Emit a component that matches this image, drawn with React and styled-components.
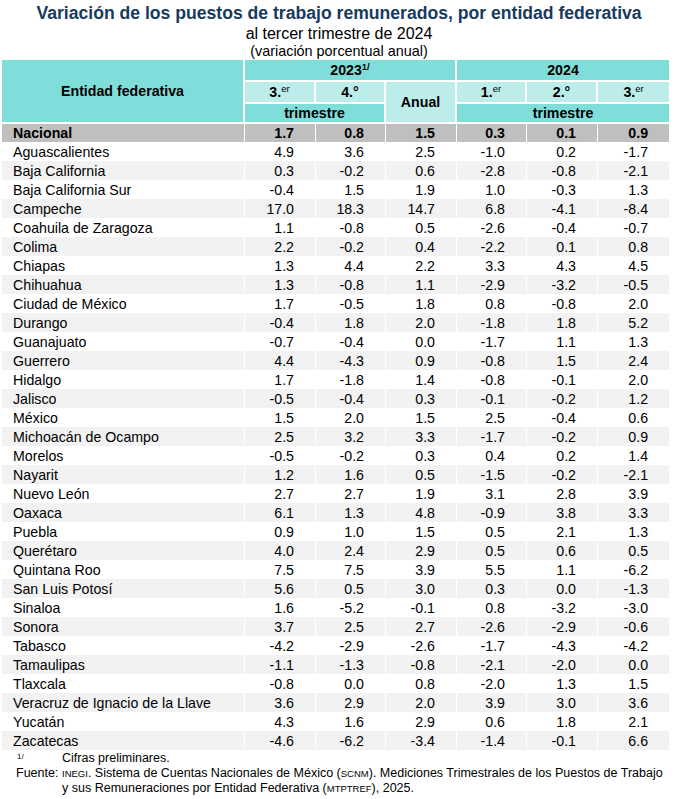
import styled, { createGlobalStyle } from "styled-components";

const GlobalStyle = createGlobalStyle`
  body {
    margin: 0;
    background: #fff;
    font-family: "Liberation Sans", Arial, sans-serif;
    color: #000;
  }
`

const rows = [
  ["Aguascalientes", "4.9", "3.6", "2.5", "-1.0", "0.2", "-1.7"],
  ["Baja California", "0.3", "-0.2", "0.6", "-2.8", "-0.8", "-2.1"],
  ["Baja California Sur", "-0.4", "1.5", "1.9", "1.0", "-0.3", "1.3"],
  ["Campeche", "17.0", "18.3", "14.7", "6.8", "-4.1", "-8.4"],
  ["Coahuila de Zaragoza", "1.1", "-0.8", "0.5", "-2.6", "-0.4", "-0.7"],
  ["Colima", "2.2", "-0.2", "0.4", "-2.2", "0.1", "0.8"],
  ["Chiapas", "1.3", "4.4", "2.2", "3.3", "4.3", "4.5"],
  ["Chihuahua", "1.3", "-0.8", "1.1", "-2.9", "-3.2", "-0.5"],
  ["Ciudad de México", "1.7", "-0.5", "1.8", "0.8", "-0.8", "2.0"],
  ["Durango", "-0.4", "1.8", "2.0", "-1.8", "1.8", "5.2"],
  ["Guanajuato", "-0.7", "-0.4", "0.0", "-1.7", "1.1", "1.3"],
  ["Guerrero", "4.4", "-4.3", "0.9", "-0.8", "1.5", "2.4"],
  ["Hidalgo", "1.7", "-1.8", "1.4", "-0.8", "-0.1", "2.0"],
  ["Jalisco", "-0.5", "-0.4", "0.3", "-0.1", "-0.2", "1.2"],
  ["México", "1.5", "2.0", "1.5", "2.5", "-0.4", "0.6"],
  ["Michoacán de Ocampo", "2.5", "3.2", "3.3", "-1.7", "-0.2", "0.9"],
  ["Morelos", "-0.5", "-0.2", "0.3", "0.4", "0.2", "1.4"],
  ["Nayarit", "1.2", "1.6", "0.5", "-1.5", "-0.2", "-2.1"],
  ["Nuevo León", "2.7", "2.7", "1.9", "3.1", "2.8", "3.9"],
  ["Oaxaca", "6.1", "1.3", "4.8", "-0.9", "3.8", "3.3"],
  ["Puebla", "0.9", "1.0", "1.5", "0.5", "2.1", "1.3"],
  ["Querétaro", "4.0", "2.4", "2.9", "0.5", "0.6", "0.5"],
  ["Quintana Roo", "7.5", "7.5", "3.9", "5.5", "1.1", "-6.2"],
  ["San Luis Potosí", "5.6", "0.5", "3.0", "0.3", "0.0", "-1.3"],
  ["Sinaloa", "1.6", "-5.2", "-0.1", "0.8", "-3.2", "-3.0"],
  ["Sonora", "3.7", "2.5", "2.7", "-2.6", "-2.9", "-0.6"],
  ["Tabasco", "-4.2", "-2.9", "-2.6", "-1.7", "-4.3", "-4.2"],
  ["Tamaulipas", "-1.1", "-1.3", "-0.8", "-2.1", "-2.0", "0.0"],
  ["Tlaxcala", "-0.8", "0.0", "0.8", "-2.0", "1.3", "1.5"],
  ["Veracruz de Ignacio de la Llave", "3.6", "2.9", "2.0", "3.9", "3.0", "3.6"],
  ["Yucatán", "4.3", "1.6", "2.9", "0.6", "1.8", "2.1"],
  ["Zacatecas", "-4.6", "-6.2", "-3.4", "-1.4", "-0.1", "6.6"],
]

const nacional = ["1.7", "0.8", "1.5", "0.3", "0.1", "0.9"]

const Page = styled.div`
    width: 678px;
    padding-top: 3px;
`

const Title = styled.h1`
    margin: 0;
    text-align: center;
    font-size: 17.6px;
    line-height: 21px;
    font-weight: bold;
    color: #173a5e;
`

const Subtitle = styled.div`
    text-align: center;
    font-size: 16px;
    line-height: 20px;
`

const Unit = styled.div`
    text-align: center;
    font-size: 14.4px;
    line-height: 15px;
    margin-bottom: 1px;
`

const Table = styled.table`
    margin-left: 2px;
    width: 667px;
    table-layout: fixed;
    border-collapse: separate;
    border-spacing: 0;
    font-size: 14.2px;
`

const Th = styled.th`
    background-color: ${p => p.$light ? "#bdedea" : "#80deda"};
    font-weight: bold;
    text-align: center;
    padding: 0;
    height: ${p => p.$h || 20}px;
    line-height: 16px;
    border-bottom: 2px solid #fff;
    border-right: ${p => p.$last ? "none" : "2px solid #fff"};
`

const Sup = styled.sup`
    font-size: 9.5px;
    font-weight: normal;
    vertical-align: 5px;
    line-height: 0;
`

const HeadSup = styled(Sup)`
    font-weight: bold;
`

const Row = styled.tr`
    background-color: ${p => p.$total ? "#bfbfbf" : p.$alt ? "#f2f2f2" : "#fff"};
    font-weight: ${p => p.$total ? "bold" : "normal"};
`

const Name = styled.td`
    padding: 0 0 0 11px;
    height: ${p => p.$total ? 18 : 19}px;
    line-height: 16px;
    white-space: nowrap;
    border-right: 1px solid #fff;
`

const Num = styled.td`
    padding: 0 21px 0 0;
    text-align: right;
    line-height: 16px;
    border-right: ${p => p.$last ? "none" : "1px solid #fff"};
`

const Footer = styled.div`
    display: grid;
    grid-template-columns: 46px 1fr;
    margin: 0 8px 0 16px;
    font-size: 12.5px;
    line-height: 15px;
    padding-top: 1px;
`

const Mark = styled.div`
    font-size: 8px;
    line-height: 12px;
    padding-left: 1px;
`

const Caps = styled.span`
    font-size: 9.5px;
    line-height: 1;
    text-transform: uppercase;
`

export default function App() {
    return (
        <Page>
            <GlobalStyle />
            <Title>Variación de los puestos de trabajo remunerados, por entidad federativa</Title>
            <Subtitle>al tercer trimestre de 2024</Subtitle>
            <Unit>(variación porcentual anual)</Unit>
            <Table>
                <colgroup>
                    <col style={{width: 243}} />
                    <col style={{width: 71}} />
                    <col style={{width: 70}} />
                    <col style={{width: 71}} />
                    <col style={{width: 70}} />
                    <col style={{width: 71}} />
                    <col style={{width: 71}} />
                </colgroup>
                <thead>
                    <tr>
                        <Th rowSpan={3}>Entidad federativa</Th>
                        <Th colSpan={3}>2023<HeadSup>1/</HeadSup></Th>
                        <Th colSpan={3} $last>2024</Th>
                    </tr>
                    <tr>
                        <Th $light>3.<Sup>er</Sup></Th>
                        <Th $light>4.°</Th>
                        <Th $light rowSpan={2}>Anual</Th>
                        <Th $light>1.<Sup>er</Sup></Th>
                        <Th $light>2.°</Th>
                        <Th $light $last>3.<Sup>er</Sup></Th>
                    </tr>
                    <tr>
                        <Th colSpan={2} $h={18}>trimestre</Th>
                        <Th colSpan={3} $h={18} $last>trimestre</Th>
                    </tr>
                </thead>
                <tbody>
                    <Row $total>
                        <Name $total>Nacional</Name>
                        {nacional.map((v, i) => <Num key={i} $last={i === 5}>{v}</Num>)}
                    </Row>
                    {rows.map((r, idx) => (
                        <Row key={r[0]} $alt={idx % 2 === 1}>
                            <Name>{r[0]}</Name>
                            {r.slice(1).map((v, i) => <Num key={i} $last={i === 5}>{v}</Num>)}
                        </Row>
                    ))}
                </tbody>
            </Table>
            <Footer>
                <Mark>1/</Mark>
                <div>Cifras preliminares.</div>
                <div>Fuente:</div>
                <div>
                    <Caps>Inegi</Caps>. Sistema de Cuentas Nacionales de México (<Caps>scnm</Caps>). Mediciones Trimestrales de los Puestos de Trabajo y sus Remuneraciones por Entidad Federativa (<Caps>mtptref</Caps>), 2025.
                </div>
            </Footer>
        </Page>
    )
}
